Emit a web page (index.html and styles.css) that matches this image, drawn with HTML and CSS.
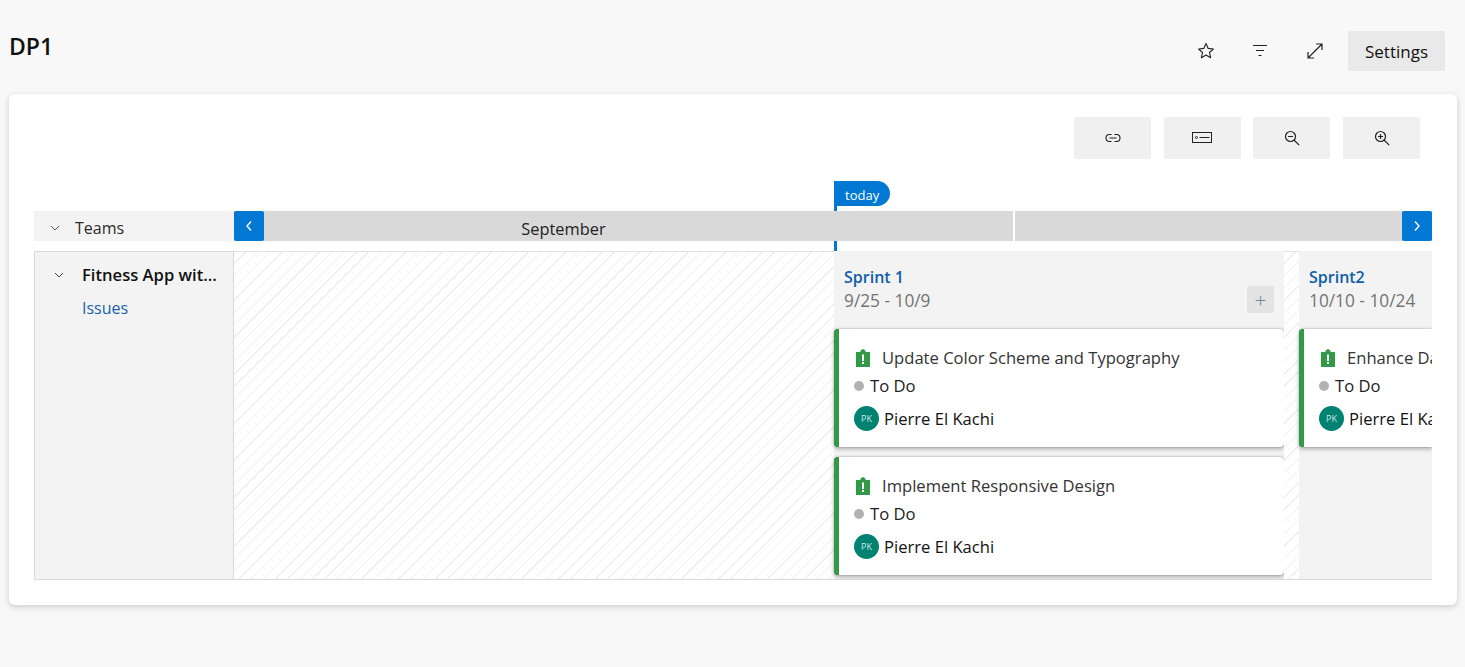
FILE: index.html
```html
<!DOCTYPE html>
<html lang="en">
<head>
    <meta charset="UTF-8">
    <title>DP1</title>
    <link rel="stylesheet" href="styles.css">
</head>
<body>
    <header class="page-header">
        <h1>DP1</h1>
        <div class="header-actions">
            <button class="icon-btn">
                <svg width="18" height="18" viewBox="0 0 18 18" fill="none" stroke="#222" stroke-width="1.1" stroke-linejoin="round"><path d="M9 1.6l2.2 4.8 5.2.6-3.9 3.5 1.1 5.2L9 13.1l-4.6 2.6 1.1-5.2L1.6 7l5.2-.6z"/></svg>
            </button>
            <button class="icon-btn">
                <svg width="18" height="18" viewBox="0 0 18 18" fill="none" stroke="#222" stroke-width="1.2"><path d="M2 3.5h14M5 8.5h8M7.5 13.5h3"/></svg>
            </button>
            <button class="icon-btn">
                <svg width="18" height="18" viewBox="0 0 18 18" fill="none" stroke="#222" stroke-width="1.2"><path d="M2 16L16 2M10 2h6v6M2 10v6h6"/></svg>
            </button>
            <button class="settings-btn">Settings</button>
        </div>
    </header>

    <main class="card">
        <div class="toolbar">
            <button class="tool-btn">
                <svg width="16" height="16" viewBox="0 0 16 16" fill="none" stroke="#222" stroke-width="1.1"><path d="M6.5 4.5H4.5a3.5 3.5 0 0 0 0 7h2M9.5 4.5h2a3.5 3.5 0 0 1 0 7h-2M4.5 8h7"/></svg>
            </button>
            <button class="tool-btn">
                <svg width="20" height="12" viewBox="0 0 20 12" fill="none" stroke="#222" stroke-width="1"><rect x=".5" y=".5" width="19" height="10"/><circle cx="4.5" cy="5.5" r="1"/><path d="M7.5 5.5h10"/></svg>
            </button>
            <button class="tool-btn">
                <svg width="16" height="16" viewBox="0 0 16 16" fill="none" stroke="#222" stroke-width="1.2"><circle cx="6.5" cy="6.5" r="5"/><path d="M4 6.5h5M10 10l5.2 5.2"/></svg>
            </button>
            <button class="tool-btn">
                <svg width="16" height="16" viewBox="0 0 16 16" fill="none" stroke="#222" stroke-width="1.2"><circle cx="6.5" cy="6.5" r="5"/><path d="M4 6.5h5M6.5 4v5M10 10l5.2 5.2"/></svg>
            </button>
        </div>

        <div class="timeline">
            <div class="today-flag">today</div>
            <div class="today-line"></div>

            <div class="months-row">
                <div class="teams-label">
                    <svg class="chevron" width="10" height="10" viewBox="0 0 10 10" fill="none" stroke="#555" stroke-width="1"><path d="M1 3l4 4 4-4"/></svg>
                    <span>Teams</span>
                </div>
                <div class="months">
                    <div class="month month-sep">September</div>
                    <div class="month month-next"></div>
                    <button class="nav-btn nav-prev">
                        <svg width="10" height="12" viewBox="0 0 10 12" fill="none" stroke="#fff" stroke-width="1.4"><path d="M7 1.5L3 6l4 4.5"/></svg>
                    </button>
                    <button class="nav-btn nav-next">
                        <svg width="10" height="12" viewBox="0 0 10 12" fill="none" stroke="#fff" stroke-width="1.4"><path d="M3 1.5L7 6l-4 4.5"/></svg>
                    </button>
                </div>
            </div>

            <div class="board">
                <aside class="team-col">
                    <div class="team-name">
                        <svg class="chevron" width="10" height="10" viewBox="0 0 10 10" fill="none" stroke="#444" stroke-width="1"><path d="M1 3l4 4 4-4"/></svg>
                        <span>Fitness App wit...</span>
                    </div>
                    <a class="team-link">Issues</a>
                </aside>

                <div class="hatch hatch-past"></div>

                <section class="sprint sprint-one">
                    <div class="sprint-head">
                        <div>
                            <div class="sprint-name">Sprint 1</div>
                            <div class="sprint-dates">9/25 - 10/9</div>
                        </div>
                        <button class="add-btn">+</button>
                    </div>
                    <article class="issue">
                        <div class="issue-title">
                            <svg class="issue-icon" width="16" height="18" viewBox="0 0 16 18"><path fill="#339947" d="M1 3h4.500V1.500L8 0l2.500 1.500V3H15v15H1z"/><rect fill="#fff" x="7" y="5.500" width="2" height="6.500"/><rect fill="#fff" x="7" y="13" width="2" height="2"/></svg>
                            <span>Update Color Scheme and Typography</span>
                        </div>
                        <div class="issue-state"><i class="state-dot"></i>To Do</div>
                        <div class="issue-owner"><span class="avatar">PK</span>Pierre El Kachi</div>
                    </article>
                    <article class="issue">
                        <div class="issue-title">
                            <svg class="issue-icon" width="16" height="18" viewBox="0 0 16 18"><path fill="#339947" d="M1 3h4.500V1.500L8 0l2.500 1.500V3H15v15H1z"/><rect fill="#fff" x="7" y="5.500" width="2" height="6.500"/><rect fill="#fff" x="7" y="13" width="2" height="2"/></svg>
                            <span>Implement Responsive Design</span>
                        </div>
                        <div class="issue-state"><i class="state-dot"></i>To Do</div>
                        <div class="issue-owner"><span class="avatar">PK</span>Pierre El Kachi</div>
                    </article>
                </section>

                <div class="hatch hatch-gap"></div>

                <section class="sprint sprint-two">
                    <div class="sprint-head">
                        <div>
                            <div class="sprint-name">Sprint2</div>
                            <div class="sprint-dates">10/10 - 10/24</div>
                        </div>
                    </div>
                    <article class="issue">
                        <div class="issue-title">
                            <svg class="issue-icon" width="16" height="18" viewBox="0 0 16 18"><path fill="#339947" d="M1 3h4.500V1.500L8 0l2.500 1.500V3H15v15H1z"/><rect fill="#fff" x="7" y="5.500" width="2" height="6.500"/><rect fill="#fff" x="7" y="13" width="2" height="2"/></svg>
                            <span>Enhance Da</span>
                        </div>
                        <div class="issue-state"><i class="state-dot"></i>To Do</div>
                        <div class="issue-owner"><span class="avatar">PK</span>Pierre El Ka</div>
                    </article>
                </section>
            </div>
        </div>
    </main>
</body>
</html>
```

FILE: styles.css
```css
* {
    box-sizing: border-box;
}
body {
    margin: 0;
    height: 667px;
    overflow: hidden;
    background: #f8f8f8;
    font-family: "Open Sans", "Noto Sans", sans-serif;
    font-size: 16px;
    color: #201f1e;
}
button {
    font-family: inherit;
    border: none;
    padding: 0;
    cursor: pointer;
}
.page-header {
    display: flex;
    justify-content: space-between;
    height: 94px;
    padding: 31px 20px 0 10px;
}
h1 {
    margin: -1px 0 0 -1px;
    font-size: 23px;
    line-height: 32px;
    font-weight: 600;
    color: #111;
}
.header-actions {
    display: flex;
    align-items: flex-start;
}
.icon-btn {
    width: 54.5px;
    height: 40px;
    background: none;
    display: flex;
    align-items: center;
    justify-content: center;
}
.settings-btn {
    width: 97px;
    height: 40px;
    margin-left: 6px;
    background: #e9e9e9;
    border-radius: 2px;
    font-size: 17px;
    font-weight: 500;
    color: #111;
}
.card {
    height: 511px;
    margin: 0 8px 0 9px;
    padding: 23px 25px 0;
    background: #fff;
    border-radius: 6px;
    box-shadow: 0 2px 6px rgba(0, 0, 0, 0.18);
}
.toolbar {
    display: flex;
    justify-content: flex-end;
    gap: 12.67px;
    padding-right: 12px;
    height: 64px;
}
.tool-btn {
    width: 77px;
    height: 42px;
    background: #f0f0f0;
    border-radius: 2px;
    display: flex;
    align-items: center;
    justify-content: center;
}
.timeline {
    position: relative;
    width: 1398px;
    padding-top: 30px;
}
.today-flag {
    position: absolute;
    left: 800px;
    top: 0;
    width: 56px;
    height: 25px;
    padding: 5px 0 0 11px;
    background: #0078d4;
    color: #fff;
    font-size: 13px;
    line-height: 18px;
    border-radius: 0 13px 13px 0;
}
.today-line {
    position: absolute;
    left: 800px;
    top: 0;
    width: 3px;
    height: 70px;
    background: #0078d4;
}
.months-row {
    display: flex;
    height: 30px;
    position: relative;
}
.teams-label {
    width: 200px;
    display: flex;
    align-items: center;
    gap: 15px;
    padding: 3px 0 0 16px;
    background: #f3f3f3;
    font-weight: 500;
    color: #2b2b2b;
}
.months {
    position: relative;
    flex: 1;
    display: flex;
    gap: 2px;
}
.month {
    background: #d9d9d9;
    line-height: 36px;
    overflow: hidden;
}
.month-sep {
    width: 779px;
    padding-right: 120px;
    text-align: center;
    font-size: 16.4px;
    color: #222;
}
.month-next {
    flex: 1;
}
.nav-btn {
    position: absolute;
    top: 0;
    width: 30px;
    height: 30px;
    background: #0078d4;
    border-radius: 2px;
    display: flex;
    align-items: center;
    justify-content: center;
}
.nav-prev {
    left: 0;
}
.nav-next {
    right: 0;
}
.board {
    display: flex;
    height: 329px;
    margin-top: 10px;
    overflow: hidden;
    border-bottom: 1px solid #d8d8d8;
}
.team-col {
    width: 200px;
    flex: none;
    padding: 11px 0 0 16px;
    background: #f3f3f3;
    border: 1px solid #d8d8d8;
    border-bottom: none;
}
.team-name {
    display: flex;
    align-items: center;
    gap: 18px;
    padding-left: 3px;
    font-size: 16.6px;
    font-weight: 600;
    color: #111;
    line-height: 24px;
    white-space: nowrap;
}
.team-link {
    display: block;
    margin: 9px 0 0 31px;
    line-height: 24px;
    color: #1a5fa8;
}
.hatch {
    flex: none;
    border-top: 1px solid #e2e2e2;
    background: repeating-linear-gradient(135deg, #fff 0, #fff 7.7px, #efefef 7.7px, #efefef 8.7px);
}
.hatch-past {
    width: 600px;
}
.hatch-gap {
    width: 15px;
}
.sprint {
    flex: none;
    background: #f3f3f3;
}
.sprint-one {
    width: 450px;
}
.sprint-two {
    width: 133px;
}
.sprint-head {
    height: 78px;
    display: flex;
    justify-content: space-between;
    padding: 14px 10px 0;
}
.sprint-name {
    font-weight: 600;
    color: #0f5ea8;
    line-height: 24px;
}
.sprint-dates {
    font-size: 17.3px;
    color: #737373;
    line-height: 24px;
}
.add-btn {
    width: 27px;
    height: 27px;
    margin-top: 21px;
    background: #e3e3e3;
    border-radius: 2px;
    color: #6d8aa0;
    font-size: 21px;
    font-weight: 300;
    line-height: 26px;
}
.issue {
    height: 118px;
    margin-bottom: 10px;
    padding: 17px 0 0 15px;
    background: #fff;
    border-left: 5px solid #339947;
    border-radius: 4px;
    font-size: 16.6px;
    box-shadow: 0 0 1px rgba(0, 0, 0, 0.5), 0 1.5px 4px rgba(0, 0, 0, 0.3);
}
.sprint-two .issue {
    border-radius: 4px 0 0 4px;
}
.issue-title {
    display: flex;
    align-items: center;
    gap: 11px;
    padding-left: 1px;
    line-height: 24px;
    color: #333;
    white-space: nowrap;
}
.issue-icon {
    flex: none;
}
.issue-state {
    display: flex;
    align-items: center;
    gap: 6px;
    margin-top: 4px;
    line-height: 24px;
    color: #222;
}
.state-dot {
    flex: none;
    width: 10px;
    height: 10px;
    border-radius: 50%;
    background: #b2b2b2;
}
.issue-owner {
    display: flex;
    align-items: center;
    gap: 5px;
    margin-top: 8px;
    color: #111;
    white-space: nowrap;
}
.avatar {
    flex: none;
    width: 25px;
    height: 25px;
    border-radius: 50%;
    background: #008272;
    color: #cde8e3;
    font-size: 9px;
    line-height: 25px;
    text-align: center;
}
```
